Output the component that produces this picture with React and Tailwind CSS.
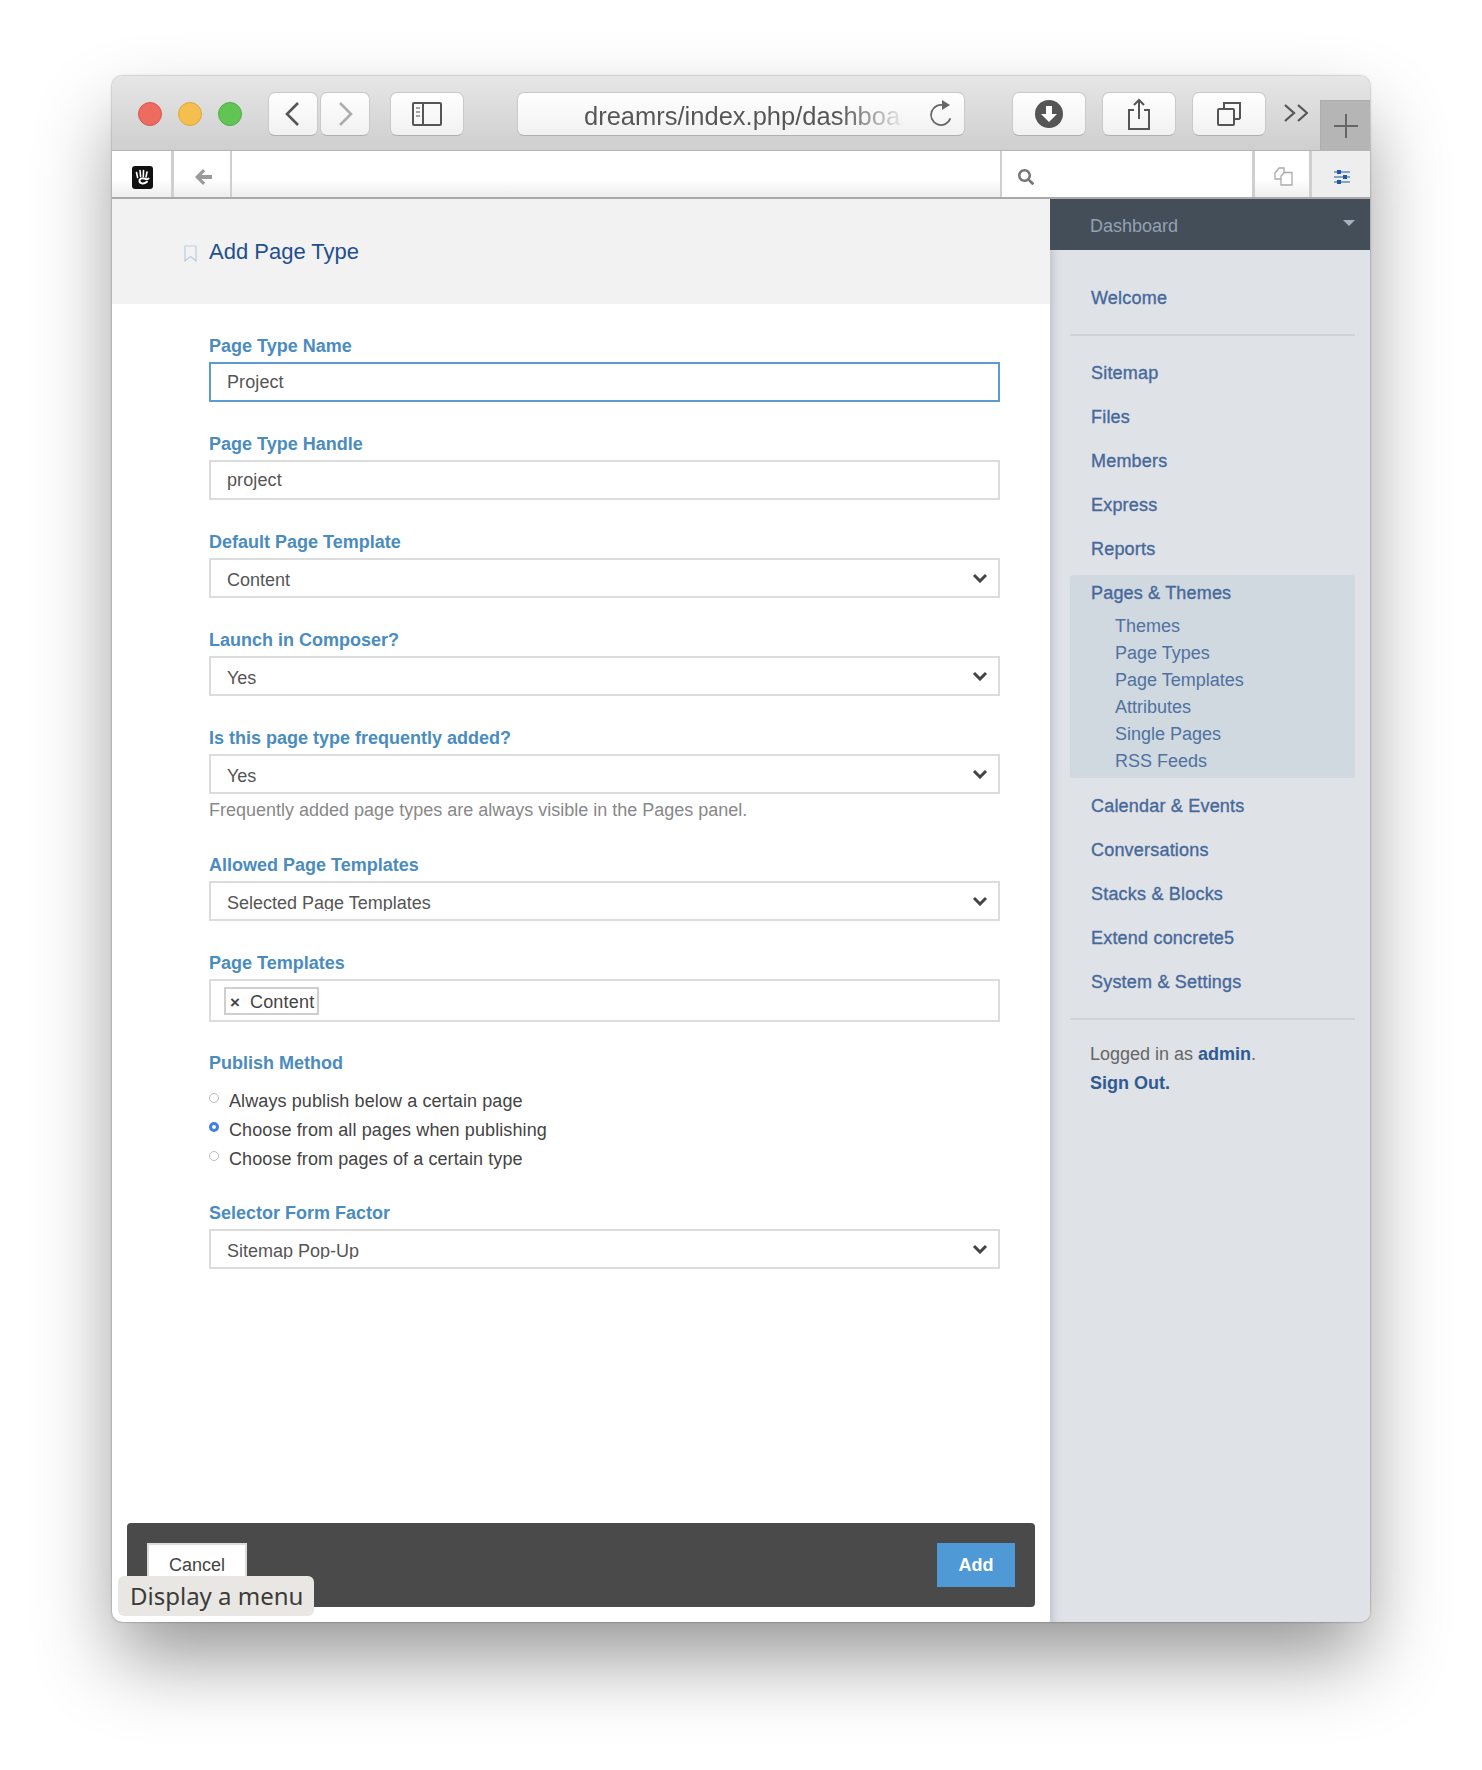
import React from "react";
import { FaSearch } from "react-icons/fa";

const Toolbtn = ({ className = "", children }) => (
  <div className={`h-[44px] rounded-[7px] border border-[#c9c9c9] border-b-[#b0b0b0] bg-gradient-to-b from-white to-[#f1f1f1] flex items-center justify-center ${className}`}>
    {children}
  </div>
);

const Light = ({ color, border }) => (
  <span className="w-[24px] h-[24px] rounded-full border" style={{ background: color, borderColor: border }} />
);

const Label = ({ children }) => (
  <label className="block h-[24px] mb-[4px] text-[18px] leading-[24px] font-bold text-[#4a8cc0]">{children}</label>
);

const Chevron = () => (
  <svg width="16" height="10" viewBox="0 0 16 10" className="shrink-0">
    <path d="M2 2l6 6 6-6" fill="none" stroke="#444" strokeWidth="3" />
  </svg>
);

const Input = ({ value, focus }) => (
  <div className={`h-[40px] border-2 flex items-center px-[16px] text-[18px] tracking-[0.1px] text-[#555] ${focus ? "border-[#5b9bd1]" : "border-[#dcdcdc]"}`}>{value}</div>
);

const Select = ({ value, clip }) => (
  <div className="h-[40px] border-2 border-[#dcdcdc] flex items-center justify-between pl-[16px] pr-[10px] text-[18px] text-[#555]">
    <span className={clip ? "block h-[20px] overflow-hidden leading-[24px]" : "block mt-[4px]"}>{value}</span>
    <Chevron />
  </div>
);

const Field = ({ label, children, className = "mb-[30px]" }) => (
  <div className={className}>
    <Label>{label}</Label>
    {children}
  </div>
);

const Radio = ({ label, on }) => (
  <div className="h-[29px] flex items-center text-[18px] tracking-[0.1px] text-[#444]">
    <span className={`w-[10px] h-[10px] rounded-full mr-[10px] mt-[-8px] ${on ? "bg-[#fff] border-[3px] border-[#3f7fe8]" : "border border-[#bdbdbd] bg-white"}`} />
    {label}
  </div>
);

const SideItem = ({ children }) => (
  <li className="h-[44px] pl-[21px] flex items-center text-[18px] tracking-[0.2px] text-[#47699a] [-webkit-text-stroke:0.35px_#47699a]">{children}</li>
);

const SubItem = ({ children }) => (
  <li className="h-[27px] pl-[45px] flex items-center text-[18px] text-[#4f729f]">{children}</li>
);

const Logo = () => (
  <svg width="21" height="23" viewBox="0 0 21 23">
    <rect width="21" height="23" rx="3" fill="#111" />
    <g stroke="#fff" strokeLinecap="round" fill="none">
      <path d="M4.500 6.500l1.100 5M8 4.500l.6 6M11.500 4.500l-.2 6M15 6l-1 5" strokeWidth="1.600" />
      <path d="M16.500 12.500c-1.500 1-2.500 1-4 .2-2.500-1.200-5.500.2-5 2.600.5 2.400 4.500 3 7.500.5" strokeWidth="2" />
    </g>
  </svg>
);

export default function App() {
  return (
    <div className="w-[1482px] h-[1770px] bg-white pt-[76px] pl-[112px] font-['Liberation_Sans',sans-serif]">
      <div className="relative w-[1258px] h-[1546px] rounded-[10px] flex flex-col shadow-[0_40px_80px_-5px_rgba(0,0,0,0.42),0_0_2px_rgba(0,0,0,0.5)] bg-white">
        {/* title bar */}
        <div className="h-[75px] shrink-0 rounded-t-[10px] border-b border-[#b5b5b5] bg-gradient-to-b from-[#e6e6e6] to-[#cfcfcf] flex items-start relative">
          <div className="flex items-center gap-[16px] pl-[26px] pt-[26px]">
            <Light color="#ee6b60" border="#d9574d" />
            <Light color="#f5bf4f" border="#dea63a" />
            <Light color="#61c554" border="#4fae43" />
          </div>
          <div className="flex items-center pl-[26px] pt-[16px] gap-[2px]">
            <Toolbtn className="w-[50px]">
              <svg width="20" height="28" viewBox="0 0 20 28"><path d="M15 3L4 14l11 11" fill="none" stroke="#555" strokeWidth="2.600" /></svg>
            </Toolbtn>
            <Toolbtn className="w-[50px]">
              <svg width="20" height="28" viewBox="0 0 20 28"><path d="M5 3l11 11L5 25" fill="none" stroke="#adadad" strokeWidth="2.600" /></svg>
            </Toolbtn>
          </div>
          <div className="pl-[20px] pt-[16px]">
            <Toolbtn className="w-[74px]">
              <svg width="30" height="24" viewBox="0 0 30 24">
                <rect x="1" y="1" width="28" height="22" rx="1" fill="none" stroke="#555" strokeWidth="2" />
                <path d="M11 1v22" stroke="#555" strokeWidth="2" />
                <path d="M4 6h4M4 10h4M4 14h4" stroke="#888" strokeWidth="1.600" />
              </svg>
            </Toolbtn>
          </div>
          <div className="pl-[53px] pt-[16px]">
            <Toolbtn className="w-[448px] !justify-start relative">
              <span className="ml-[66px] mt-[3px] w-[318px] overflow-hidden whitespace-nowrap text-[25.5px] leading-[34px] bg-gradient-to-r from-[#555] from-80% to-[#e8e8e8] to-100% bg-clip-text text-transparent">dreamrs/index.php/dashboard</span>
              <svg width="26" height="28" viewBox="0 0 26 28" className="absolute right-[10px] top-[7px]">
                <path d="M13 5a10 10 0 1 0 10 10" fill="none" stroke="#666" strokeWidth="1.800" transform="rotate(20 13 15)" />
                <path d="M14 0l8 5-8 5z" fill="#666" />
              </svg>
            </Toolbtn>
          </div>
          <div className="pl-[47px] pt-[16px] flex gap-[16px]">
            <Toolbtn className="w-[74px]">
              <svg width="28" height="28" viewBox="0 0 28 28">
                <circle cx="14" cy="14" r="14" fill="#555" />
                <path d="M11 6h6v8h5l-8 8-8-8h5z" fill="#fff" />
              </svg>
            </Toolbtn>
            <Toolbtn className="w-[74px]">
              <svg width="24" height="32" viewBox="0 0 24 32" fill="none" stroke="#555" strokeWidth="2">
                <path d="M7 12H2v19h20V12h-5" />
                <path d="M12 21V2M7 7l5-5 5 5" />
              </svg>
            </Toolbtn>
            <Toolbtn className="w-[74px]">
              <svg width="24" height="24" viewBox="0 0 24 24" fill="none" stroke="#555" strokeWidth="2">
                <rect x="1" y="7" width="16" height="16" rx="1" />
                <path d="M7 7V1h16v15l-1 1h-5" />
              </svg>
            </Toolbtn>
          </div>
          <svg width="24" height="18" viewBox="0 0 24 18" className="ml-[18px] mt-[28px]" fill="none" stroke="#555" strokeWidth="2.200">
            <path d="M1 1l9 8-9 8M14 1l9 8-9 8" />
          </svg>
          <div className="absolute right-0 bottom-0 w-[50px] h-[50px] bg-[#b5b5b5] border-l border-t border-[#adadad] flex items-center justify-center">
            <svg width="24" height="24" viewBox="0 0 24 24"><path d="M12 0v24M0 12h24" stroke="#666" strokeWidth="2" /></svg>
          </div>
        </div>

        {/* concrete toolbar */}
        <div className="h-[48px] shrink-0 flex border-b-2 border-[#a9a9a9] bg-gradient-to-b from-white from-60% to-[#eeeeee]">
          <div className="w-[62px] flex items-center justify-center border-r-[3px] border-[#cfcfcf] pt-[6px] pl-[1px]"><Logo /></div>
          <div className="w-[58px] flex items-center justify-center border-r-[2px] border-[#cfcfcf] pt-[6px] pl-[3px]">
            <svg width="17" height="16" viewBox="0 0 17 16" fill="#9a9a9a"><path d="M8 0L0 8l8 8 2.200-2.200L6.500 10H17V6H6.500l3.700-3.800z" /></svg>
          </div>
          <div className="flex-1" />
          <div className="w-[252px] bg-white border-l-2 border-[#cfcfcf] flex items-center pl-[16px] pt-[6px]"><FaSearch className="text-[#777] text-[16px]" /></div>
          <div className="w-[60px] border-l-[3px] border-r-[3px] border-[#cfcfcf] flex items-center justify-center pt-[5px] pl-[2px]">
            <svg width="19" height="19" viewBox="0 0 19 19" fill="#fff" stroke="#aaa" strokeWidth="1.300">
              <path d="M1 6l4-5h5v11H1z" />
              <path d="M7 9l3.500-3.500H18V18H7z" />
            </svg>
          </div>
          <div className="w-[58px] bg-[#eeeeee] flex items-center justify-center pt-[6px] pl-[1px]">
            <svg width="18" height="16" viewBox="0 0 18 16" stroke="#1f5aa0" strokeWidth="1" fill="#1f5aa0">
              <path d="M1 3h16M1 8h16M1 13h16" />
              <rect x="4.500" y="1.500" width="3" height="3" />
              <rect x="10.500" y="6.500" width="3" height="3" />
              <rect x="4.500" y="11.500" width="3" height="3" />
            </svg>
          </div>
        </div>

        {/* body */}
        <div className="flex-1 flex min-h-0">
          <main className="w-[938px] flex flex-col">
            <div className="h-[105px] bg-[#f2f2f2] flex items-start pl-[72px] pt-[39px] shrink-0">
              <svg width="13" height="17" viewBox="0 0 13 17" className="mt-[7px]" fill="none" stroke="#bccbe0" strokeWidth="1.200"><path d="M1 1h11v15l-5.500-4.500L1 16z" /></svg>
              <h1 className="ml-[12px] text-[22px] leading-[28px] text-[#1f4f8f]">Add Page Type</h1>
            </div>
            <form className="pl-[97px] w-[888px] pt-[30px]">
              <Field label="Page Type Name"><Input value="Project" focus /></Field>
              <Field label="Page Type Handle"><Input value="project" /></Field>
              <Field label="Default Page Template"><Select value="Content" /></Field>
              <Field label="Launch in Composer?"><Select value="Yes" /></Field>
              <Field label="Is this page type frequently added?" className="mb-[30px]">
                <Select value="Yes" />
                <p className="h-[29px] text-[18px] leading-[33px] text-[#888]">Frequently added page types are always visible in the Pages panel.</p>
              </Field>
              <Field label="Allowed Page Templates"><Select value="Selected Page Templates" clip /></Field>
              <Field label="Page Templates" className="mb-[29px]">
                <div className="h-[43px] border-2 border-[#dcdcdc] flex items-center pl-[13px] text-[18px] text-[#444]">
                  <span className="h-[28px] w-[95px] border-2 border-[#cfcfcf] flex items-center pl-[4px] whitespace-nowrap">
                    <span className="text-[17px] font-bold mr-[10px] mt-[5px]">×</span><span className="mt-[4px] tracking-[0.2px]">Content</span>
                  </span>
                </div>
              </Field>
              <Label>Publish Method</Label>
              <div className="mt-[12px] mb-[27px]">
                <Radio label="Always publish below a certain page" />
                <Radio label="Choose from all pages when publishing" on />
                <Radio label="Choose from pages of a certain type" />
              </div>
              <Field label="Selector Form Factor"><Select value="Sitemap Pop-Up" clip /></Field>
            </form>
            <div className="mt-auto mb-[15px] ml-[15px] w-[908px] h-[84px] rounded-[4px] bg-[#4a4a4a] flex items-start justify-between px-[20px] pt-[20px]">
              <button type="button" className="w-[100px] h-[44px] bg-white border-2 border-[#dcdcdc] text-[18px] text-[#444]">Cancel</button>
              <button type="button" className="w-[78px] h-[44px] bg-[#4f9ad6] text-[18px] font-bold text-white">Add</button>
            </div>
          </main>
          <aside className="flex-1 bg-[#dfe2e7] shadow-[inset_10px_0_10px_-8px_rgba(90,105,125,0.3)] flex flex-col rounded-br-[10px]">
            <div className="h-[51px] shrink-0 bg-[#434e59] flex items-center justify-between pl-[40px] pr-[15px] pt-[3px] text-[18px] text-[#93a1b3]">
              <span>Dashboard</span>
              <span className="w-0 h-0 border-x-[6px] border-x-transparent border-t-[6px] border-t-[#a6b2c0] mb-[6px]" />
            </div>
            <div className="pl-[20px] pr-[15px] pt-[26px] text-[18px]">
              <ul className="border-b-2 border-[#cfd3d9] pb-[14px] mb-[15px]">
                <SideItem>Welcome</SideItem>
              </ul>
              <ul>
                <SideItem>Sitemap</SideItem>
                <SideItem>Files</SideItem>
                <SideItem>Members</SideItem>
                <SideItem>Express</SideItem>
                <SideItem>Reports</SideItem>
                <li className="bg-[#d0d8e0] rounded-[4px] h-[203px] mt-[4px] mb-[6px]">
                  <div className="h-[36px] pl-[21px] flex items-center tracking-[0.18px] text-[#47699a] [-webkit-text-stroke:0.35px_#47699a]">Pages &amp; Themes</div>
                  <ul className="pt-[2px]">
                    <SubItem>Themes</SubItem>
                    <SubItem>Page Types</SubItem>
                    <SubItem>Page Templates</SubItem>
                    <SubItem>Attributes</SubItem>
                    <SubItem>Single Pages</SubItem>
                    <SubItem>RSS Feeds</SubItem>
                  </ul>
                </li>
                <SideItem>Calendar &amp; Events</SideItem>
                <SideItem>Conversations</SideItem>
                <SideItem>Stacks &amp; Blocks</SideItem>
                <SideItem>Extend concrete5</SideItem>
                <SideItem>System &amp; Settings</SideItem>
              </ul>
              <div className="border-t-2 border-[#cfd3d9] mt-[14px] pt-[20px] pl-[20px] leading-[29px] text-[18px] text-[#666]">
                <p>Logged in as <b className="text-[#2f5b93]">admin</b>.</p>
                <p><b className="text-[#2f5b93]">Sign Out.</b></p>
              </div>
            </div>
          </aside>
        </div>

        {/* tooltip */}
        <div className="absolute left-[6px] top-[1500px] w-[196px] h-[40px] rounded-[6px] bg-[#e8e7e4] flex items-center pl-[12px] font-['Noto_Sans',sans-serif] text-[24px] text-[#3c3b38]">Display a menu</div>
      </div>
    </div>
  );
}
